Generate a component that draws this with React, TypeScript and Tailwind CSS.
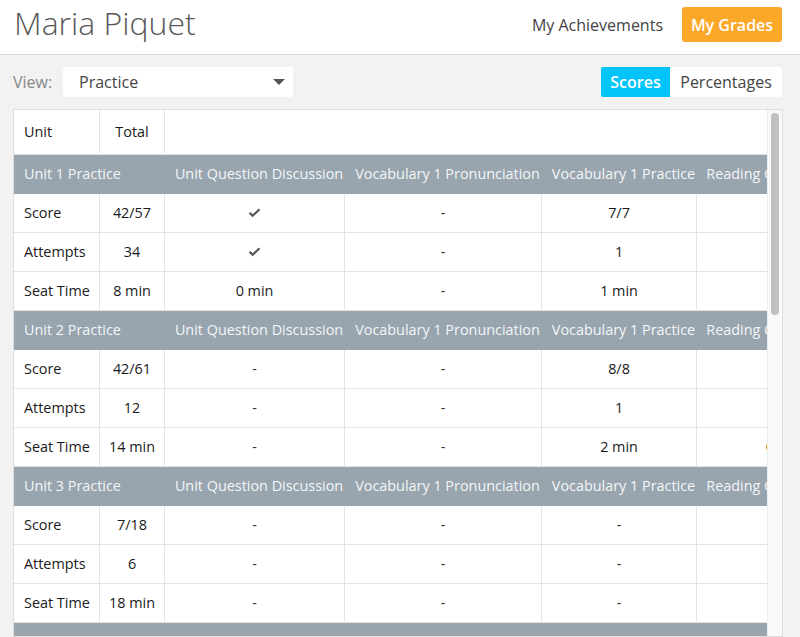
import React from "react";

type Cell = string | { check: true } | { warn: true };

interface Unit {
  name: string;
  rows: { label: string; total: string; cells: Cell[] }[];
}

const columns = [
  "Unit Question Discussion",
  "Vocabulary 1 Pronunciation",
  "Vocabulary 1 Practice",
  "Reading Comprehension",
];

const widths = ["w-[180px]", "w-[197px]", "w-[155px]", "w-[176px]"];

const ok: Cell = { check: true };

const units: Unit[] = [
  {
    name: "Unit 1 Practice",
    rows: [
      { label: "Score", total: "42/57", cells: [ok, "-", "7/7", ""] },
      { label: "Attempts", total: "34", cells: [ok, "-", "1", ""] },
      { label: "Seat Time", total: "8 min", cells: ["0 min", "-", "1 min", ""] },
    ],
  },
  {
    name: "Unit 2 Practice",
    rows: [
      { label: "Score", total: "42/61", cells: ["-", "-", "8/8", ""] },
      { label: "Attempts", total: "12", cells: ["-", "-", "1", ""] },
      { label: "Seat Time", total: "14 min", cells: ["-", "-", "2 min", { warn: true }] },
    ],
  },
  {
    name: "Unit 3 Practice",
    rows: [
      { label: "Score", total: "7/18", cells: ["-", "-", "-", ""] },
      { label: "Attempts", total: "6", cells: ["-", "-", "-", ""] },
      { label: "Seat Time", total: "18 min", cells: ["-", "-", "-", ""] },
    ],
  },
  {
    name: "Unit 4 Practice",
    rows: [
      { label: "Score", total: "0/12", cells: ["-", "-", "-", ""] },
    ],
  },
];

function CheckMark() {
  return (
    <svg width="13" height="10" viewBox="0 0 13 10" className="text-[#555]">
      <path d="M0.8 5.6 L2.4 4.1 L4.6 6.2 L10.9 0.6 L12.3 2 L4.6 9.2 Z" fill="currentColor" />
    </svg>
  );
}

function renderCell(c: Cell) {
  if (typeof c === "string") return c;
  if ("check" in c) return <CheckMark />;
  return (
    <span className="inline-flex w-[38px] items-center">
      <span className="h-[8px] w-[8px] rounded-full bg-[#e8890c]" />
    </span>
  );
}

export default function App() {
  return (
    <div className="flex h-[637px] w-[800px] flex-col overflow-hidden bg-[#f2f2f2] font-['Open_Sans',sans-serif]">
      <header className="flex h-[55px] shrink-0 items-start justify-between border-b border-[#dadada] bg-white pl-[14px] pr-[18px]">
        <h1 className="mt-[3px] text-[32px] font-light leading-[40px] text-[#585858]">Maria Piquet</h1>
        <div className="mt-[7px] flex items-center">
          <a className="mr-[19px] text-[16px] leading-[24px] text-[#444]">My Achievements</a>
          <button className="h-[35px] w-[100px] rounded-[3px] bg-[#fba829] text-[16px] font-semibold text-white">
            My Grades
          </button>
        </div>
      </header>

      <div className="mt-[12px] flex h-[30px] shrink-0 items-center justify-between pl-[13px] pr-[18px]">
        <div className="flex items-center">
          <span className="w-[50px] text-[16px] text-[#888]">View:</span>
          <div className="flex h-[30px] w-[230px] items-center justify-between rounded-[2px] bg-white pl-[16px] pr-[8px]">
            <span className="text-[16px] text-[#444]">Practice</span>
            <svg width="12" height="6" viewBox="0 0 12 6">
              <path d="M0 0 H12 L6 6 Z" fill="#555" />
            </svg>
          </div>
        </div>
        <div className="flex h-[30px] overflow-hidden rounded-[2px] text-[16px]">
          <button className="w-[69px] bg-[#00c4fa] font-semibold text-white">Scores</button>
          <button className="w-[112px] bg-white text-[#444]">Percentages</button>
        </div>
      </div>

      <div className="ml-[13px] mr-[17px] mt-[12px] flex flex-1 overflow-hidden border border-[#dedede] bg-white">
        <div className="flex-1 overflow-hidden">
          <div className="w-[863px] text-[14.4px] text-[#1a1a1a]">
            <div className="flex h-[45px] border-b border-[#e3e3e3] pb-[1px]">
              <div className="flex w-[86px] items-center border-r border-[#e3e3e3] pl-[10px]">Unit</div>
              <div className="flex w-[65px] items-center justify-center border-r border-[#e3e3e3]">Total</div>
              <div className="flex-1" />
            </div>

            {units.map((u) => (
              <div key={u.name}>
                <div className="flex h-[39px] items-center bg-[#98a4ae] pb-[1px] text-[#f4f6f7]">
                  <div className="w-[151px] pl-[10px]">{u.name}</div>
                  {columns.map((col, i) => (
                    <div key={col} className={`${widths[i]} whitespace-nowrap pl-[8px] text-center`}>
                      {col}
                    </div>
                  ))}
                </div>
                {u.rows.map((r) => (
                  <div key={r.label} className="flex h-[39px] border-b border-[#e3e3e3]">
                    <div className="flex w-[86px] items-center border-r border-[#e3e3e3] pb-[1px] pl-[10px]">{r.label}</div>
                    <div className="flex w-[65px] items-center justify-center border-r border-[#e3e3e3] pb-[1px]">{r.total}</div>
                    {r.cells.map((c, i) => (
                      <div
                        key={i}
                        className={`${widths[i]} flex items-center justify-center border-r border-[#e3e3e3] pb-[1px] ${
                          c === "-" ? "text-[#333]" : ""
                        }`}
                      >
                        {renderCell(c)}
                      </div>
                    ))}
                  </div>
                ))}
              </div>
            ))}
          </div>
        </div>

        <div className="flex w-[15px] shrink-0 justify-center border-l border-[#ececec] bg-[#f9f9f9] pt-[3px]">
          <div className="h-[202px] w-[8px] rounded-full bg-[#c1c1c1]" />
        </div>
      </div>
    </div>
  );
}
